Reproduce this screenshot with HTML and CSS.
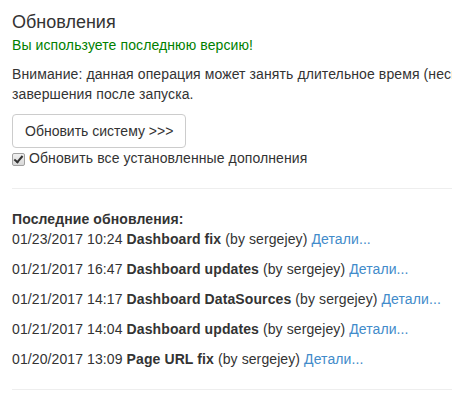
FILE: index.html
```html
<!DOCTYPE html>
<html lang="ru">
<head>
    <meta charset="UTF-8">
    <meta name="viewport" content="width=device-width, initial-scale=1.0">
    <title>Обновления</title>
    <link rel="stylesheet" href="styles.css">
</head>
<body>

    <!-- Update panel -->
    <div class="container">
        <h4 class="title">Обновления</h4>
        <div class="status">Вы используете последнюю версию!</div>

        <p class="notice">Внимание: данная операция может занять длительное время (несколько минут), не закрывайте страницу до<br>завершения после запуска.</p>

        <button type="button" class="btn">Обновить систему &gt;&gt;&gt;</button>

        <label class="checkbox"><input type="checkbox" checked> Обновить все установленные дополнения</label>

        <hr>

        <!-- Latest updates list -->
        <div class="history">
            <b>Последние обновления:</b>
            <p>01/23/2017 10:24 <b>Dashboard fix</b> (by sergejey) <a href="#">Детали...</a></p>
            <p>01/21/2017 16:47 <b>Dashboard updates</b> (by sergejey) <a href="#">Детали...</a></p>
            <p>01/21/2017 14:17 <b>Dashboard DataSources</b> (by sergejey) <a href="#">Детали...</a></p>
            <p>01/21/2017 14:04 <b>Dashboard updates</b> (by sergejey) <a href="#">Детали...</a></p>
            <p>01/20/2017 13:09 <b>Page URL fix</b> (by sergejey) <a href="#">Детали...</a></p>
        </div>

        <hr>
    </div>

</body>
</html>
```

FILE: styles.css
```css
body {
    margin: 0;
    overflow: hidden;
    font-family: "Liberation Sans", Arial, sans-serif;
    font-size: 14px;
    line-height: 20px;
    letter-spacing: 0.1px;
    color: #333;
    background: #fff;
}

.container {
    width: 760px;
    padding: 0 12px;
}

.title {
    font-size: 18px;
    font-weight: normal;
    line-height: 1.1;
    letter-spacing: 0;
    margin: 13px 0 2px;
}

.status {
    color: #008000;
}

.notice {
    margin: 9px 0 10px;
}

.btn {
    display: block;
    font-family: inherit;
    font-size: 14px;
    line-height: 20px;
    letter-spacing: 0;
    color: #333;
    background: #fff;
    border: 1px solid #ccc;
    border-radius: 4px;
    padding: 6px 12px;
    margin: 0;
}

.checkbox {
    display: flex;
    align-items: flex-start;
    gap: 4px;
}

/* grey native-looking checkbox */
.checkbox input {
    appearance: none;
    -webkit-appearance: none;
    position: relative;
    width: 13px;
    height: 13px;
    margin: 5px 0 0;
    border: 1px solid #a0a0a0;
    border-radius: 2px;
    background: linear-gradient(#f0f0f0, #d8d8d8);
}

.checkbox input:checked::after {
    content: "";
    position: absolute;
    left: 3px;
    top: 0;
    width: 3px;
    height: 7px;
    border: solid #333;
    border-width: 0 2px 2px 0;
    transform: rotate(40deg);
}

hr {
    border: 0;
    border-top: 1px solid #eee;
    margin: 20px 0;
}

.history p {
    margin: 0 0 10px;
}

a {
    color: #428bca;
    text-decoration: none;
}
```
